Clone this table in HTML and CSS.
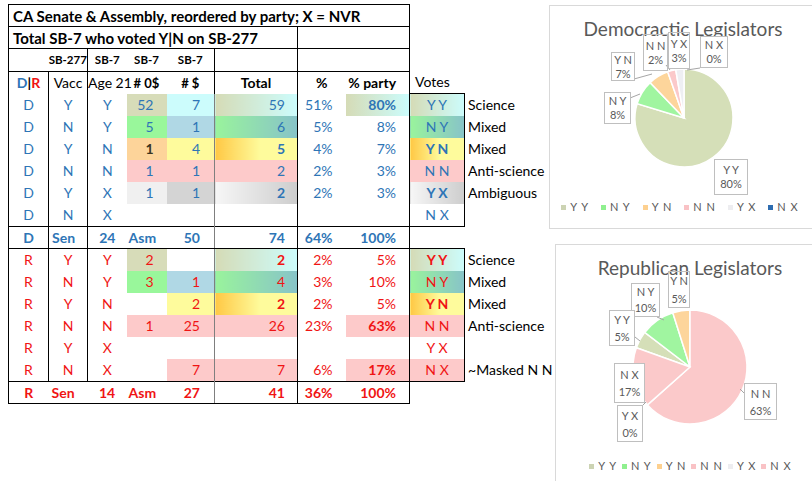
FILE: index.html
```html
<!DOCTYPE html>
<html>
<head>
<meta charset="utf-8">
<link rel="stylesheet" href="styles.css">
</head>
<body>
<div class="sheet">
  <table class="grid">
    <colgroup>
      <col class="w40"><col class="w39"><col class="w39"><col class="w40"><col class="w48"><col class="w83"><col class="w48"><col class="w64"><col class="w55"><col class="w100">
    </colgroup>
    <tr class="r22">
      <td colspan="8" class="title T L R B">CA Senate &amp; Assembly, reordered by party; X = NVR</td><td></td><td></td>
    </tr>
    <tr class="r22">
      <td colspan="6" class="title L R B">Total SB-7 who voted Y|N on SB-277</td><td colspan="2" class="R B"></td><td></td><td></td>
    </tr>
    <tr class="r23">
      <td class="L B"></td><td class="sb c R B">SB-277</td><td class="sb c B">SB-7</td><td class="sb c B">SB-7</td><td class="sb c R B">SB-7</td><td class="R B"></td><td colspan="2" class="R B"></td><td></td><td></td>
    </tr>
    <tr class="r22 hdr">
      <td class="L R c hb"><span class="blue">D</span>|<span class="red">R</span></td><td class="R c">Vacc</td><td class="c">Age 21</td><td class="c hb hs">#&nbsp;0$</td><td class="c hb hs R">#&nbsp;$</td><td class="c hb R">Total</td><td class="c hb">%</td><td class="pct hb R">% party</td><td class="votes-h">Votes</td><td></td>
    </tr>

    <tr class="r22 blue">
      <td class="L R c">D</td><td class="R c">Y</td><td class="c">Y</td><td class="n yy-a">52</td><td class="n5 Rg yy-b">7</td><td class="tot R g-yy">59</td><td class="pct">51%</td><td class="pct R hb g-yy">80%</td><td class="vote R T g-yy">Y Y</td><td class="lbl">Science</td>
    </tr>
    <tr class="r22 blue">
      <td class="L R c">D</td><td class="R c">N</td><td class="c">Y</td><td class="n ny-a">5</td><td class="n5 Rg ny-b">1</td><td class="tot R g-ny">6</td><td class="pct">5%</td><td class="pct R">8%</td><td class="vote R g-ny">N Y</td><td class="lbl">Mixed</td>
    </tr>
    <tr class="r22 blue">
      <td class="L R c">D</td><td class="R c">Y</td><td class="c">N</td><td class="n yn-a dark hb">1</td><td class="n5 Rg yn-b">4</td><td class="tot R hb g-yn">5</td><td class="pct">4%</td><td class="pct R">7%</td><td class="vote R hb g-yn">Y N</td><td class="lbl">Mixed</td>
    </tr>
    <tr class="r22 blue">
      <td class="L R c">D</td><td class="R c">N</td><td class="c">N</td><td class="n nn">1</td><td class="n5 Rg nn">1</td><td class="tot R nn">2</td><td class="pct">2%</td><td class="pct R">3%</td><td class="vote R nn">N N</td><td class="lbl">Anti-science</td>
    </tr>
    <tr class="r22 blue">
      <td class="L R c">D</td><td class="R c">Y</td><td class="c">X</td><td class="n yx-a">1</td><td class="n5 Rg yx-b">1</td><td class="tot R hb g-yx">2</td><td class="pct">2%</td><td class="pct R">3%</td><td class="vote R hb g-yx">Y X</td><td class="lbl">Ambiguous</td>
    </tr>
    <tr class="r23 blue">
      <td class="L R c">D</td><td class="R c">N</td><td class="c">X</td><td class="n"></td><td class="n5 Rg"></td><td class="tot R"></td><td class="pct"></td><td class="pct R"></td><td class="vote R B">N X</td><td class="lbl"></td>
    </tr>
    <tr class="r22 blue hb">
      <td class="L R T B c">D</td><td class="R T B sen">Sen</td><td class="T B c">24</td><td class="T B asm">Asm</td><td class="T B n5 Rg">50</td><td class="T B R tot">74</td><td class="T B pct">64%</td><td class="T B R pct">100%</td><td></td><td></td>
    </tr>

    <tr class="r22 red">
      <td class="L R c">R</td><td class="R c">Y</td><td class="c">Y</td><td class="n yy-a">2</td><td class="n5 Rg"></td><td class="tot R hb g-yy">2</td><td class="pct">2%</td><td class="pct R">5%</td><td class="vote R T hb g-yy">Y Y</td><td class="lbl">Science</td>
    </tr>
    <tr class="r22 red">
      <td class="L R c">R</td><td class="R c">N</td><td class="c">Y</td><td class="n ny-a">3</td><td class="n5 Rg ny-b">1</td><td class="tot R g-ny">4</td><td class="pct">3%</td><td class="pct R">10%</td><td class="vote R g-ny">N Y</td><td class="lbl">Mixed</td>
    </tr>
    <tr class="r22 red">
      <td class="L R c">R</td><td class="R c">Y</td><td class="c">N</td><td class="n"></td><td class="n5 Rg yn-b">2</td><td class="tot R hb g-yn">2</td><td class="pct">2%</td><td class="pct R">5%</td><td class="vote R hb g-yn">Y N</td><td class="lbl">Mixed</td>
    </tr>
    <tr class="r22 red">
      <td class="L R c">R</td><td class="R c">N</td><td class="c">N</td><td class="n nn">1</td><td class="n5 Rg nn">25</td><td class="tot R nn">26</td><td class="pct">23%</td><td class="pct R hb nn">63%</td><td class="vote R nn">N N</td><td class="lbl">Anti-science</td>
    </tr>
    <tr class="r22 red">
      <td class="L R c">R</td><td class="R c">Y</td><td class="c">X</td><td class="n"></td><td class="n5 Rg"></td><td class="tot R"></td><td class="pct"></td><td class="pct R"></td><td class="vote R">Y X</td><td class="lbl"></td>
    </tr>
    <tr class="r23 red">
      <td class="L R c">R</td><td class="R c">N</td><td class="c">X</td><td class="n"></td><td class="n5 Rg nn">7</td><td class="tot R nn">7</td><td class="pct">6%</td><td class="pct R hb nn">17%</td><td class="vote R B nn">N X</td><td class="lbl">~Masked N N</td>
    </tr>
    <tr class="r22 red hb">
      <td class="L T B c">R</td><td class="T B sen">Sen</td><td class="T B c">14</td><td class="T B asm">Asm</td><td class="T B n5 Rg">27</td><td class="T B R tot">41</td><td class="T B pct">36%</td><td class="T B R pct">100%</td><td></td><td></td>
    </tr>
  </table>

  <div class="chart chart-dem">
    <div class="chart-title">Democractic Legislators</div>
    <svg class="pie" width="266" height="222" viewBox="0 0 266 222">
      <g class="slices">
        <path class="s-yy" d="M134,112 L134,63 A49,49 0 1 1 87.15,97.65 Z"/>
        <path class="s-ny" d="M134,112 L87.15,97.65 A49,49 0 0 1 100.09,76.63 Z"/>
        <path class="s-yn" d="M134,112 L100.09,76.63 A49,49 0 0 1 117.67,65.8 Z"/>
        <path class="s-nn" d="M134,112 L117.67,65.8 A49,49 0 0 1 125.72,63.71 Z"/>
        <path class="s-yx" d="M134,112 L125.72,63.71 A49,49 0 0 1 134,63 Z"/>
      </g>
      <g class="leaders">
        <path d="M80,92 L90,88"/>
        <path d="M84,73 L102,68"/>
        <path d="M116,59 L120,64"/>
        <path d="M150,62 L137,64"/>
      </g>
    </svg>
    <div class="dl dem-yy">Y Y<br>80%</div>
    <div class="dl dem-ny">N Y<br>8%</div>
    <div class="dl dem-yn">Y N<br>7%</div>
    <div class="dl dem-nn">N N<br>2%</div>
    <div class="dl dem-yx">Y X<br>3%</div>
    <div class="dl dem-nx">N X<br>0%</div>
    <div class="legend legend-dem">
      <span class="li"><i class="k-yy"></i>Y Y</span>
      <span class="li"><i class="k-ny"></i>N Y</span>
      <span class="li"><i class="k-yn"></i>Y N</span>
      <span class="li"><i class="k-nn"></i>N N</span>
      <span class="li"><i class="k-yx"></i>Y X</span>
      <span class="li"><i class="k-nxb"></i>N X</span>
    </div>
  </div>

  <div class="chart chart-rep">
    <div class="chart-title">Republican Legislators</div>
    <svg class="pie" width="268" height="245" viewBox="0 0 268 245">
      <g class="slices">
        <path class="s-yy" d="M134,122 L80.36,102.73 A57,57 0 0 1 88.69,87.42 Z"/>
        <path class="s-ny" d="M134,122 L88.69,87.42 A57,57 0 0 1 116.8,67.66 Z"/>
        <path class="s-yn" d="M134,122 L116.8,67.66 A57,57 0 0 1 134,65 Z"/>
        <path class="s-nn" d="M134,122 L134,65 A57,57 0 1 1 91.46,159.93 Z"/>
        <path class="s-nx" d="M134,122 L91.46,159.93 A57,57 0 0 1 80.36,102.73 Z"/>
      </g>
      <g class="leaders">
        <path d="M101,72 L108,75"/>
        <path d="M79,92 L84,96"/>
        <path d="M87,160 L90,157"/>
        <path d="M188,148 L184,144"/>
      </g>
    </svg>
    <div class="dl rep-yn">Y N<br>5%</div>
    <div class="dl rep-ny">N Y<br>10%</div>
    <div class="dl rep-yy">Y Y<br>5%</div>
    <div class="dl rep-nx">N X<br>17%</div>
    <div class="dl rep-yx">Y X<br>0%</div>
    <div class="dl rep-nn">N N<br>63%</div>
    <div class="legend legend-rep">
      <span class="li"><i class="k-yy"></i>Y Y</span>
      <span class="li"><i class="k-ny"></i>N Y</span>
      <span class="li"><i class="k-yn"></i>Y N</span>
      <span class="li"><i class="k-nn"></i>N N</span>
      <span class="li"><i class="k-yx"></i>Y X</span>
      <span class="li"><i class="k-nn"></i>N X</span>
    </div>
  </div>
</div>
</body>
</html>
```

FILE: styles.css
```css
html, body {
  margin: 0;
  padding: 0;
  overflow: hidden;
  background: #fff;
}
body {
  width: 812px;
  height: 481px;
  font-family: Lato, "Liberation Sans", sans-serif;
  color: #000;
}
.sheet {
  position: relative;
  width: 812px;
  height: 481px;
  box-sizing: border-box;
  padding: 4px 0 0 8px;
  overflow: hidden;
}

/* ---------- spreadsheet grid ---------- */
.grid {
  border-collapse: collapse;
  table-layout: fixed;
  width: 556px;
  font-size: 14px;
}
.w40 { width: 40px; }
.w39 { width: 39px; }
.w48 { width: 48px; }
.w83 { width: 83px; }
.w64 { width: 64px; }
.w55 { width: 55px; }
.w100 { width: 100px; }
td {
  padding: 0;
  white-space: nowrap;
  line-height: 16px;
  vertical-align: middle;
}
.r22 { height: 22px; }
.r23 { height: 23px; }

.T { border-top: 1px solid #000; }
.B { border-bottom: 1px solid #000; }
.L { border-left: 1px solid #000; }
.R { border-right: 1px solid #000; }
.Rg { border-right: 1px solid #7f7f7f; }

.title {
  font-weight: 700;
  font-size: 15px;
  padding-left: 4px;
}
.sb { font-size: 11.5px; font-weight: 700; }
.hb { font-weight: 700; }
.hs { font-size: 13px; }
.c { text-align: center; }
.n { text-align: right; padding-right: 13px; }
.n5 { text-align: right; padding-right: 14px; }
.tot { text-align: right; padding-right: 12px; }
.pct { text-align: right; padding-right: 13px; }
.sen { text-align: left; padding-left: 3px; }
.asm { text-align: left; padding-left: 2px; }
.vote { text-align: center; }
.votes-h { padding-left: 5px; }
.lbl { color: #000; padding-left: 3px; font-weight: 400; }
.blue { color: #2e75b6; }
.red { color: #f01414; }
.hdr { color: #000; }
.dark { color: #3a3520; }

/* fills */
.yy-a { background: #d7dcb9; }
.yy-b { background: #ccfcfc; }
.ny-a { background: #99f79b; }
.ny-b { background: #b0d8e5; }
.yn-a { background: #fdd49a; }
.yn-b { background: #fefb9c; }
.nn { background: #fdcaca; }
.yx-a { background: #f0f0f0; }
.yx-b { background: #d4d4d4; }
.g-yy { background: linear-gradient(to right, #d5dbb6, #ccfcfc); }
.g-ny { background: linear-gradient(to right, #99f39c, #87c3c8); }
.g-yn { background: linear-gradient(to right, #ffc845, #fefb9c 55%); }
.g-yx { background: linear-gradient(to right, #f6f6f6, #cdcdcd); }

/* ---------- charts ---------- */
.chart {
  position: absolute;
  background: #fff;
  border: 1px solid #d9d9d9;
  color: #595959;
}
.chart-dem { left: 549px; top: 5px; width: 266px; height: 222px; }
.chart-rep { left: 555px; top: 244px; width: 268px; height: 245px; }
.chart-title {
  position: relative;
  z-index: 2;
  text-align: center;
  font-size: 19px;
  line-height: 22px;
  margin-top: 12px;
  color: #595959;
}
.pie { position: absolute; left: 0; top: 0; }
.slices path { stroke: #fff; stroke-width: 1.5; }
.leaders path { stroke: #a6a6a6; stroke-width: 1; fill: none; }
.s-yy { fill: #d5dfb8; }
.s-ny { fill: #a0f5a0; }
.s-yn { fill: #fdd59b; }
.s-nn { fill: #fbc9ca; }
.s-yx { fill: #eeeff3; }
.s-nx { fill: #fbc9ca; }

.dl {
  position: absolute;
  z-index: 3;
  box-sizing: border-box;
  border: 1px solid #bfbfbf;
  font-size: 11px;
  line-height: 14px;
  text-align: center;
  color: #595959;
  display: flex;
  flex-direction: column;
  justify-content: center;
}
.dem-yy { left: 164px; top: 153px; width: 34px; height: 36px; background: #fff; }
.dem-ny { left: 54px; top: 86px; width: 27px; height: 32px; background: #fff; }
.dem-yn { left: 61px; top: 46px; width: 24px; height: 29px; background: #fff; }
.dem-nn { left: 93px; top: 28px; width: 25px; height: 37px; }
.dem-yx { left: 118px; top: 26px; width: 22px; height: 37px; }
.dem-nx { left: 150px; top: 30px; width: 28px; height: 32px; background: #fff; }

.rep-yn { left: 112px; top: 26px; width: 22px; height: 37px; line-height: 18px; }
.rep-ny { left: 75px; top: 38px; width: 29px; height: 34px; line-height: 16px; background: #fff; }
.rep-yy { left: 53px; top: 65px; width: 26px; height: 36px; line-height: 17px; background: #fff; }
.rep-nx { left: 58px; top: 118px; width: 31px; height: 40px; line-height: 17px; background: #fff; }
.rep-yx { left: 61px; top: 160px; width: 26px; height: 37px; line-height: 17px; background: #fff; }
.rep-nn { left: 188px; top: 138px; width: 33px; height: 37px; line-height: 17px; background: #fff; }

.legend {
  position: absolute;
  left: 0;
  right: 0;
  display: flex;
  justify-content: center;
  font-size: 11px;
  line-height: 14px;
  color: #595959;
}
.legend-dem { top: 194px; padding-right: 6px; gap: 12px; }
.legend-rep { top: 214px; padding-left: 1px; gap: 5px; }
.li { display: flex; align-items: center; gap: 4px; letter-spacing: 1px; }
.li i { display: block; width: 5px; height: 5px; }
.k-yy { background: #ccd3b3; }
.k-ny { background: #8ff08f; }
.k-yn { background: #fdd08f; }
.k-nn { background: #f9c2c5; }
.k-yx { background: #ededf0; }
.k-nxb { background: #2e6cb0; }
```
